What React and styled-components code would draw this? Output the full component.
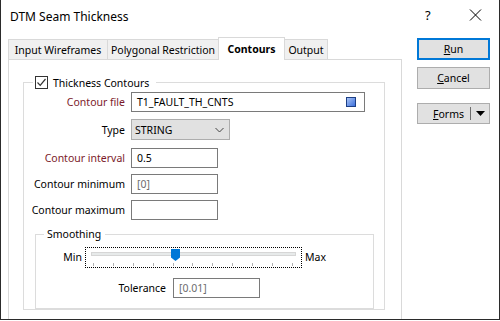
import styled, { createGlobalStyle } from 'styled-components'

const GlobalStyle = createGlobalStyle`
  body {
    margin: 0;
    background: #fff;
    font-family: "Noto Sans", "Liberation Sans", sans-serif;
    font-size: 10.5px;
    color: #000;
  }
`

const tabs = [
  { name: 'Input Wireframes', w: 100 },
  { name: 'Polygonal Restriction', w: 112 },
  { name: 'Contours', w: 67, active: true },
  { name: 'Output', w: 44 },
]

const TICKS = 11
const SMOOTH_VALUE = 4

const App = () => {
  return (
    <>
      <GlobalStyle />
      <Window>
        <TitleBar>
          <Title>DTM Seam Thickness</Title>
          <HelpMark>?</HelpMark>
          <CloseIcon width="13" height="12" viewBox="0 0 13 12">
            <path d="M1 0.5 L12 11.5 M12 0.5 L1 11.5" stroke="#000" strokeWidth="1" />
          </CloseIcon>
        </TitleBar>
        <Body>
          <Main>
            <TabRow>
              {tabs.map((t) => (
                <Tab key={t.name} $w={t.w} $active={t.active}>{t.name}</Tab>
              ))}
            </TabRow>
            <Panel>
              <GroupBox>
                <Legend>
                  <CheckBox>
                    <svg width="11" height="11" viewBox="0 0 11 11">
                      <path d="M1.5 5.5 L4.2 8.3 L9.5 2" fill="none" stroke="#333" strokeWidth="1.2" />
                    </svg>
                  </CheckBox>
                  Thickness Contours
                </Legend>
                <FormGrid>
                  <FieldLabel $required>Contour file</FieldLabel>
                  <TextBox $w={234}>
                    T1_FAULT_TH_CNTS
                    <FileIcon />
                  </TextBox>

                  <FieldLabel $mt={7}>Type</FieldLabel>
                  <Select $mt={7}>
                    STRING
                    <svg width="9" height="6" viewBox="0 0 9 6">
                      <path d="M0.5 1 L4.5 5 L8.5 1" fill="none" stroke="#444" strokeWidth="1" />
                    </svg>
                  </Select>

                  <FieldLabel $required $mt={8}>Contour interval</FieldLabel>
                  <TextBox $w={87} $mt={8}>0.5</TextBox>

                  <FieldLabel $mt={6}>Contour minimum</FieldLabel>
                  <TextBox $w={87} $mt={6} $muted>[0]</TextBox>

                  <FieldLabel $mt={6}>Contour maximum</FieldLabel>
                  <TextBox $w={87} $mt={6} />
                </FormGrid>

                <SmoothGroup>
                  <SmoothLegend>Smoothing</SmoothLegend>
                  <SliderRow>
                    <SideLabel $align="right">Min</SideLabel>
                    <SliderFocus>
                      <TrackWrap>
                        <Track />
                        <Thumb
                          width="9"
                          height="12"
                          viewBox="0 0 9 12"
                          style={{ left: `${1 + (SMOOTH_VALUE / (TICKS - 1)) * 197}px` }}
                        >
                          <path d="M0 0 H9 V8.5 L4.5 12 L0 8.5 Z" fill="#0078d7" />
                        </Thumb>
                      </TrackWrap>
                      <Ticks>
                        {Array.from({ length: TICKS }).map((_, i) => (
                          <Tick key={i} />
                        ))}
                      </Ticks>
                    </SliderFocus>
                    <SideLabel>Max</SideLabel>
                  </SliderRow>
                  <ToleranceRow>
                    <FieldLabel>Tolerance</FieldLabel>
                    <TextBox $w={87} $muted>[0.01]</TextBox>
                  </ToleranceRow>
                </SmoothGroup>
              </GroupBox>
            </Panel>
          </Main>

          <ButtonColumn>
            <Button $default><u>R</u>un</Button>
            <Button $mt={7}><u>C</u>ancel</Button>
            <SplitButton>
              <SplitLabel><u>F</u>orms</SplitLabel>
              <SplitDivider />
              <svg width="9" height="5" viewBox="0 0 9 5">
                <path d="M0 0 H9 L4.5 5 Z" fill="#000" />
              </svg>
            </SplitButton>
          </ButtonColumn>
        </Body>
      </Window>
    </>
  )
}

export default App

const Window = styled.div`
width: 500px;
height: 320px;
box-sizing: border-box;
border: 1px solid #2b2b2b;
border-top: none;
background: #fff;
overflow: hidden;
display: flex;
flex-direction: column;
`
const TitleBar = styled.div`
height: 31px;
flex-shrink: 0;
display: flex;
align-items: center;
padding: 0 0 0 9px;
font-size: 12px;
`
const Title = styled.div`
flex: 1;
margin-top: 1px;
`
const HelpMark = styled.div`
width: 14px;
margin-right: 30px;
margin-bottom: 1px;
font-family: "Noto Sans", sans-serif;
font-size: 13px;
`
const CloseIcon = styled.svg`
margin-right: 17px;
margin-bottom: 1px;
`
const Body = styled.div`
flex: 1;
display: flex;
padding: 6px 0 0 7px;
min-height: 0;
`
const Main = styled.div`
width: 394px;
display: flex;
flex-direction: column;
`
const TabRow = styled.div`
height: 22px;
display: flex;
align-items: flex-end;
position: relative;
z-index: 1;
padding-left: 1px;
`
const Tab = styled.div`
width: ${(p) => p.$w}px;
height: ${(p) => (p.$active ? 23 : 20)}px;
margin-bottom: ${(p) => (p.$active ? -1 : 0)}px;
margin-left: -1px;
box-sizing: border-box;
border: 1px solid #d9d9d9;
border-bottom: none;
background: ${(p) => (p.$active ? '#fff' : '#f0f0f0')};
font-weight: ${(p) => (p.$active ? 700 : 400)};
font-size: 10.5px;
display: flex;
align-items: center;
justify-content: center;
padding-top: ${(p) => (p.$active ? 0 : 1)}px;
white-space: nowrap;
`
const Panel = styled.div`
flex: 1;
border: 1px solid #d9d9d9;
border-bottom: none;
padding: 15px 16px 0 14px;
`
const GroupBox = styled.fieldset`
margin: 0;
padding: 2px 0 0 0;
border: 1px solid #dcdcdc;
min-width: 0;
`
const Legend = styled.legend`
margin-left: 9px;
padding: 0 7px 0 2px;
height: 15px;
display: flex;
align-items: center;
gap: 5px;
`
const CheckBox = styled.span`
width: 13px;
height: 13px;
box-sizing: border-box;
border: 1px solid #333;
background: #fff;
display: flex;
align-items: center;
justify-content: center;
`
const FormGrid = styled.div`
display: grid;
grid-template-columns: 101px 1fr;
column-gap: 6px;
align-items: center;
`
const FieldLabel = styled.div`
text-align: right;
white-space: nowrap;
color: ${(p) => (p.$required ? '#7b1a2a' : '#000')};
margin-top: ${(p) => p.$mt || 0}px;
`
const TextBox = styled.div`
width: ${(p) => p.$w}px;
height: 20px;
box-sizing: border-box;
border: 1px solid #7a7a7a;
background: #fff;
padding: 0 8px 0 5px;
display: flex;
align-items: center;
justify-content: space-between;
color: ${(p) => (p.$muted ? '#6d6d6d' : '#000')};
margin-top: ${(p) => p.$mt || 0}px;
`
const FileIcon = styled.span`
width: 10px;
height: 10px;
box-sizing: border-box;
border: 1px solid #1d3f85;
background: linear-gradient(135deg, #a9c4f5, #3d70dc);
`
const Select = styled.div`
width: 99px;
height: 21px;
box-sizing: border-box;
border: 1px solid #adadad;
background: #e1e1e1;
padding: 0 5px 0 3px;
display: flex;
align-items: center;
justify-content: space-between;
margin-top: ${(p) => p.$mt || 0}px;
`
const SmoothGroup = styled.fieldset`
margin: 7px 10px 0 11px;
padding: 0 0 10px 0;
border: 1px solid #dcdcdc;
min-width: 0;
min-height: 0;
`
const SmoothLegend = styled.legend`
margin-left: 8px;
padding: 0 4px 0 3px;
height: 15px;
line-height: 15px;
`
const SliderRow = styled.div`
display: grid;
grid-template-columns: 46px 217px auto;
column-gap: 3px;
align-items: center;
margin-top: 5px;
`
const SideLabel = styled.div`
text-align: ${(p) => p.$align || 'left'};
padding-bottom: 1px;
`
const SliderFocus = styled.div`
height: 21px;
box-sizing: border-box;
border: 1px dotted #000;
padding: 0 5px;
display: flex;
flex-direction: column;
`
const TrackWrap = styled.div`
position: relative;
height: 11px;
padding-top: 4px;
box-sizing: border-box;
`
const Track = styled.div`
height: 4px;
box-sizing: border-box;
border: 1px solid #d6d6d6;
background: #e7eaea;
`
const Thumb = styled.svg`
position: absolute;
top: 1px;
`
const Ticks = styled.div`
display: flex;
justify-content: space-between;
padding: 4px 3px 0 2px;
`
const Tick = styled.span`
width: 1px;
height: 3px;
background: #b0b0b0;
`
const ToleranceRow = styled.div`
display: grid;
grid-template-columns: 130px auto;
column-gap: 7px;
align-items: center;
margin-top: 10px;
`
const ButtonColumn = styled.div`
width: 73px;
margin-left: 15px;
padding-top: 1px;
display: flex;
flex-direction: column;
`
const Button = styled.div`
height: 22px;
box-sizing: border-box;
border: ${(p) => (p.$default ? '2px solid #0078d7' : '1px solid #adadad')};
background: #e1e1e1;
display: flex;
align-items: center;
justify-content: center;
margin-top: ${(p) => p.$mt || 0}px;
u { text-decoration: underline; }
`
const SplitButton = styled.div`
height: 21px;
margin-top: 14px;
box-sizing: border-box;
border: 1px solid #adadad;
background: #e1e1e1;
display: flex;
align-items: center;
padding-right: 4px;
`
const SplitLabel = styled.span`
flex: 1;
text-align: right;
padding-right: 6px;
`
const SplitDivider = styled.span`
width: 1px;
height: 13px;
background: #6e6e6e;
margin-right: 5px;
`
